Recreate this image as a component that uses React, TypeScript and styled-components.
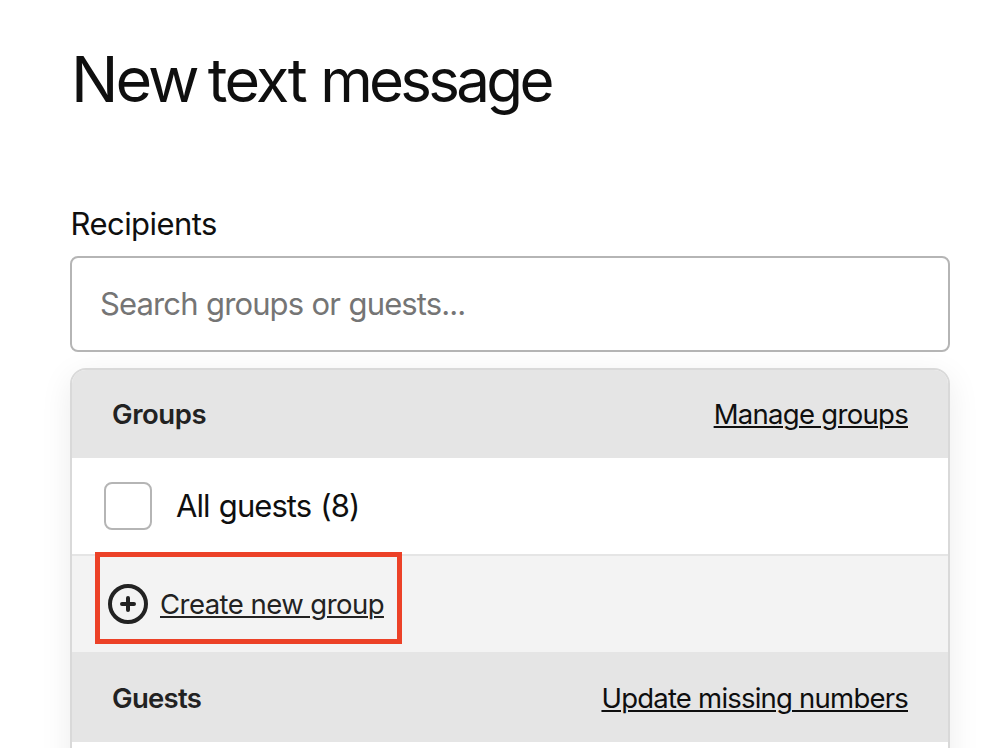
import React from "react";
import styled, { createGlobalStyle } from "styled-components";

const GlobalStyle = createGlobalStyle`
  *, *::before, *::after { box-sizing: border-box; }
  html, body { margin: 0; background: #fff; }
  body { overflow: hidden; font-family: Inter, "Liberation Sans", sans-serif; color: #0f0f0f; }
`;

const Page = styled.main`
  height: 748px;
  overflow: hidden;
  padding: 39px 34px 0 70px;
`;

const Title = styled.h1`
  display: flex;
  align-items: baseline;
  margin: 0;
  padding-left: 1px;
  font-size: 63px;
  line-height: 80px;
  height: 80px;
  font-weight: 400;
  white-space: pre;
`;

const Word = styled.span<{ $size: number; $spacing: number; $gap?: number }>`
  font-size: ${(p) => p.$size}px;
  letter-spacing: ${(p) => p.$spacing}px;
  margin-right: ${(p) => p.$gap ?? 0}px;
`;

const Field = styled.div`
  display: flex;
  flex-direction: column;
  margin-top: 85px;
`;

const Label = styled.label`
  padding-left: 0.5px;
  font-size: 31px;
  line-height: 40px;
  height: 40px;
  letter-spacing: -0.55px;
  margin-bottom: 12px;
`;

const SearchInput = styled.input`
  width: 880px;
  height: 96px;
  padding: 0 28px 1px;
  border: 2px solid #b5b5b5;
  border-radius: 8px;
  background: #fff;
  font: 400 31px/40px Inter, "Liberation Sans", sans-serif;
  letter-spacing: -0.88px;
  word-spacing: 0.6px;
  outline: none;
  &::placeholder { color: #757575; opacity: 1; }
`;

const Dropdown = styled.section`
  width: 880px;
  height: 460px;
  margin-top: 16px;
  border: 2px solid #d9d9d9;
  border-radius: 16px;
  background: #fff;
  overflow: hidden;
  box-shadow: 0 8px 32px rgba(0, 0, 0, 0.08);
`;

const SectionHeader = styled.header<{ $height: number; $offset?: number }>`
  display: flex;
  align-items: center;
  justify-content: space-between;
  height: ${(p) => p.$height}px;
  padding: ${(p) => p.$offset ?? 0}px 40px 0;
  background: #e5e5e5;
`;

const SectionTitle = styled.h2<{ $spacing: number }>`
  margin: 0;
  font-size: 27.5px;
  line-height: 36px;
  font-weight: 600;
  letter-spacing: ${(p) => p.$spacing}px;
  color: #222;
`;

const TextLink = styled.a<{ $spacing: number; $soft?: boolean }>`
  font-size: 27.5px;
  line-height: 36px;
  letter-spacing: ${(p) => p.$spacing}px;
  color: ${(p) => (p.$soft ? "#222" : "#0f0f0f")};
  text-decoration: underline;
  text-decoration-thickness: 2px;
  text-underline-offset: 2px;
  white-space: nowrap;
`;

const GuestRow = styled.label`
  display: flex;
  align-items: center;
  gap: 24px;
  height: 96px;
  padding: 0 32px;
  font-size: 31px;
  line-height: 40px;
  letter-spacing: -0.95px;
  word-spacing: 1.5px;
`;

const Checkbox = styled.input`
  appearance: none;
  width: 48px;
  height: 48px;
  margin: 0;
  border: 2px solid #b5b5b5;
  border-radius: 8px;
  background: #fff;
`;

const CreateRow = styled.div`
  position: relative;
  display: flex;
  align-items: center;
  gap: 12px;
  height: 98px;
  padding: 0 36px;
  border-top: 2px solid #e5e5e5;
  background: #f3f3f3;
`;

const Highlight = styled.span`
  position: absolute;
  left: 23px;
  top: -4px;
  width: 307px;
  height: 92px;
  border: 5px solid #ec4127;
  pointer-events: none;
`;

const PlusCircle = () => (
  <svg width="40" height="40" viewBox="0 0 40 40" fill="none" stroke="#222" strokeWidth="4" aria-hidden="true">
    <circle cx="20" cy="20" r="18" />
    <path d="M20 14v12M14 20h12" strokeLinecap="round" />
  </svg>
);

export default function App() {
  return (
    <>
      <GlobalStyle />
      <Page>
        <Title>
          <Word $size={63} $spacing={-3} $gap={11}>New</Word>
          <Word $size={61} $spacing={-2.6} $gap={15}>text</Word>
          <Word $size={60} $spacing={-3.7}>message</Word>
        </Title>
        <Field>
          <Label htmlFor="recipients">Recipients</Label>
          <SearchInput id="recipients" placeholder="Search groups or guests..." />
        </Field>
        <Dropdown>
          <SectionHeader $height={88}>
            <SectionTitle $spacing={-0.45}>Groups</SectionTitle>
            <TextLink $spacing={-0.7}>Manage groups</TextLink>
          </SectionHeader>
          <GuestRow>
            <Checkbox type="checkbox" />
            <span>All guests (8)</span>
          </GuestRow>
          <CreateRow>
            <PlusCircle />
            <TextLink $spacing={-0.54} $soft>Create new group</TextLink>
            <Highlight />
          </CreateRow>
          <SectionHeader $height={90} $offset={2}>
            <SectionTitle $spacing={-0.7}>Guests</SectionTitle>
            <TextLink $spacing={-0.78}>Update missing numbers</TextLink>
          </SectionHeader>
        </Dropdown>
      </Page>
    </>
  );
}
